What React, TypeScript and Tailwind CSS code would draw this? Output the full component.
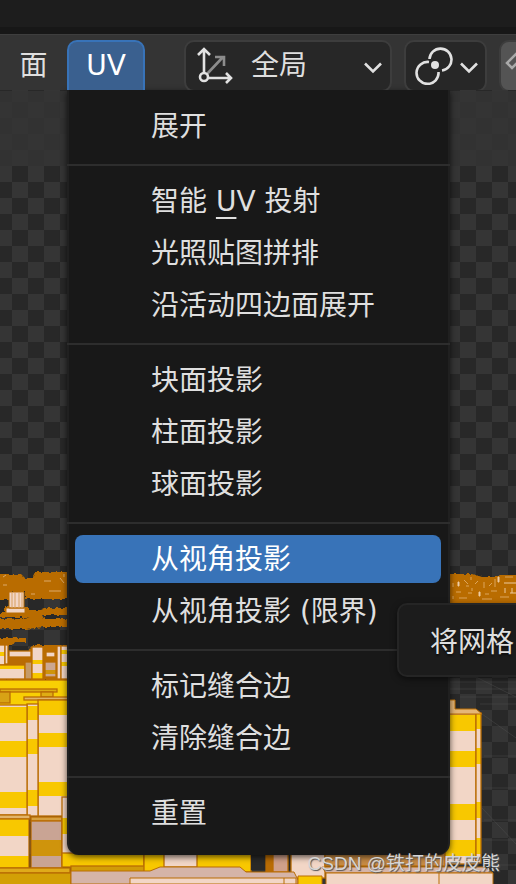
import React from "react";

type Item = { label: string; accel?: string; rest?: string };

const groups: Item[][] = [
  [{ label: "展开" }],
  [{ label: "智能 ", accel: "U", rest: "V 投射" }, { label: "光照贴图拼排" }, { label: "沿活动四边面展开" }],
  [{ label: "块面投影" }, { label: "柱面投影" }, { label: "球面投影" }],
  [{ label: "从视角投影" }, { label: "从视角投影 (限界)" }],
  [{ label: "标记缝合边" }, { label: "清除缝合边" }],
  [{ label: "重置" }],
];

const BROWN = "#b96c04";
const PINK = "#f2d6c6";
const YELLOW = "#f8c800";

type Block = { x: number; y: number; w: number; h: number; fill?: string; stripes?: number[][] };

const blocks: Block[] = [
  { x: -2, y: 645, w: 7, h: 20, stripes: [[652, 4]] },
  { x: 5, y: 645, w: 3, h: 19 },
  { x: 9, y: 651, w: 22, h: 6 },
  { x: 9, y: 658, w: 22, h: 7, fill: BROWN },
  { x: -2, y: 665, w: 27, h: 14, stripes: [[665, 4]] },
  { x: 25, y: 662, w: 7, h: 17, fill: "#c59a68" },
  { x: 32, y: 647, w: 11, h: 32, stripes: [[660, 4], [673, 6]] },
  { x: 46, y: 652, w: 9, h: 5 },
  { x: 45, y: 662, w: 11, h: 15, fill: "#cba791", stripes: [[670, 4]] },
  { x: 57, y: 646, w: 4, h: 33 },
  { x: 61, y: 646, w: 9, h: 33, stripes: [[650, 4], [662, 4]] },
  { x: -2, y: 680, w: 72, h: 36, fill: "#f8cf04" },
  { x: 0, y: 689, w: 57, h: 3, fill: "#dfad14" },
  { x: -2, y: 692, w: 12, h: 11, fill: "#d8a215" },
  { x: 41, y: 692, w: 12, h: 5, fill: "#dfad14" },
  { x: 24, y: 697, w: 46, h: 3, fill: "#e2b46a" },
  { x: 38, y: 700, w: 32, h: 116, stripes: [[700, 15], [733, 14], [782, 14]] },
  { x: 27, y: 704, w: 11, h: 112, stripes: [[706, 14], [739, 15], [790, 16]] },
  { x: -2, y: 705, w: 29, h: 110, stripes: [[707, 16], [741, 16], [792, 16]] },
  { x: -2, y: 815, w: 32, h: 4, fill: "#e2b46a" },
  { x: -2, y: 819, w: 31, h: 49, stripes: [[819, 17], [856, 12]] },
  { x: 31, y: 817, w: 31, h: 4, fill: "#d6a040" },
  { x: 31, y: 821, w: 31, h: 47, fill: "#c9a494", stripes: [[840, 16]] },
  { x: 62, y: 797, w: 12, h: 67, stripes: [[818, 16]] },
  { x: 62, y: 853, w: 82, h: 14, fill: YELLOW },
  { x: 71, y: 866, w: 80, h: 6, fill: "#d19b08" },
  { x: -2, y: 868, w: 72, h: 5, fill: "#e0ab1a" },
  { x: -2, y: 873, w: 73, h: 13, fill: "#d3a005" },
  { x: 440, y: 714, w: 36, h: 150, stripes: [[715, 16], [751, 16], [804, 16], [840, 16]] },
  { x: 476, y: 713, w: 5, h: 150, stripes: [[713, 16], [748, 16], [802, 16], [838, 16]] },
  { x: 144, y: 852, w: 107, h: 20, fill: YELLOW },
  { x: 164, y: 852, w: 33, h: 15 },
  { x: 266, y: 852, w: 7, h: 20, fill: BROWN },
  { x: 273, y: 852, w: 15, h: 20, fill: "#d0a08a" },
  { x: 291, y: 852, w: 34, h: 26 },
  { x: 325, y: 852, w: 120, h: 14, fill: "#c78b45" },
];

function Scene() {
  return (
    <svg className="absolute left-0 top-0" width="516" height="884" viewBox="0 0 516 884" aria-hidden="true">
      <defs>
        <pattern id="checker" x="12" y="166" width="32" height="32" patternUnits="userSpaceOnUse">
          <rect width="32" height="32" fill="#353535" />
          <path d="M0 0h16v16H0zM16 16h16v16H16z" fill="#282828" />
        </pattern>
        <filter id="rough" x="-5%" y="-5%" width="110%" height="110%">
          <feTurbulence type="fractalNoise" baseFrequency="0.25" numOctaves="2" seed="4" />
          <feDisplacementMap in="SourceGraphic" scale="4" xChannelSelector="R" yChannelSelector="G" />
        </filter>
      </defs>
      <rect width="516" height="884" fill="url(#checker)" />
      <rect y="91" width="516" height="75" fill="#343434" opacity="0.8" />
      <path
        d="M450 664L516 697M482 714L516 738M482 808L516 844M450 682h66M450 689h66M460 697h56M480 704h36M484 756h32M484 788h32M484 820h32M484 840h32M484 865h32"
        stroke="#5a5a5a"
        opacity="0.35"
        fill="none"
      />
      <g fill={BROWN} filter="url(#rough)">
        <path d="M-5 574H20L24 578H33L36 572H72V599H26V592H9V600H-5zM-5 613H5V607H29V610H40L44 608H72V615H42L44 619H72V627H44L26 629H-5V619H12L30 617H-5zM-5 638H26V642H14L12 645H-5zM28 648L36 645H72V680H-5V655H28z" />
        <path d="M445 574H473L482 577H495L500 575H520V610H445z" />
      </g>
      <path d="M3 585h4M3 577l3-2M44 581h7M49 591h12M60 578l4 5M31 594h4M64 574v3" stroke="#dca968" fill="none" />
      <path d="M9 592h15v16H9zM6 608h19v5H6z" fill={PINK} stroke={BROWN} />
      <path d="M12 592v16M15 592v16M19 592v16M22 592v16" stroke="#d8a060" fill="none" />
      {blocks.map((b, i) => (
        <g key={i}>
          <rect x={b.x} y={b.y} width={b.w} height={b.h} fill={b.fill ?? PINK} />
          {b.stripes?.map(([y, h]) => (
            <rect key={y} x={b.x} y={y} width={b.w} height={h} fill={b.fill ? "#cf940c" : YELLOW} />
          ))}
          <rect x={b.x} y={b.y} width={b.w} height={b.h} fill="none" stroke={BROWN} strokeWidth="1.3" />
        </g>
      ))}
      <g fill={PINK} stroke="#ecc99d" strokeWidth="1">
        <path d="M458 582h1v4h-1zM479 592h1v4h-1zM498 577h1v5h-1zM504 583h12M505 588v5M512 588v5M510 593h6" />
      </g>
      <path
        d="M453 583v4M464 580l4 4M471 577v3M466 586h3M475 584l3-3M484 582v6M489 586l3-3M456 592h5M468 593h4M485 594h4M491 591h6M459 598h8M482 599h10M500 597h9M495 579v8M472 588v3M453 596v3M505 577h8"
        stroke="#dca55c"
        fill="none"
      />
      <path d="M449 700h6v9h21l6 5h-33z" fill="#e5b677" stroke={BROWN} />
      <path d="M71 871H150L160 867H240L246 872L294 872L298 880V884H71z" fill="#d5b4a8" stroke={BROWN} />
      <path d="M130 878H296V884H130zM284 878v6" fill={PINK} stroke={BROWN} />
      <path d="M322 867H484L493 873H326z" fill="#d5b4a8" stroke={BROWN} />
      <path d="M326 873H493V886H326zM439 873v13" fill={PINK} stroke={BROWN} />
      <path d="M298 876h24v10h-24z" fill={YELLOW} stroke={BROWN} />
      <path d="M251 854h14v16h-14z" fill="#292929" />
    </svg>
  );
}

function Chevron() {
  return (
    <svg className="mt-[3px]" width="18" height="12" viewBox="0 0 18 12" fill="none" stroke="#e0e0e0" strokeWidth="2.6" aria-hidden="true">
      <path d="M1 1.5L9 9.5L17 1.5" />
    </svg>
  );
}

export default function App() {
  return (
    <main className="relative min-h-screen overflow-hidden bg-[#303030] font-['DejaVu_Sans','Noto_Sans_CJK_SC',sans-serif] text-[28px] leading-[40px] text-[#dfdfdf] [text-shadow:0_2px_2px_#0008]">
      <Scene />
      <div className="relative">
        <div className="h-[34px] border-b-[7px] border-[#171717] bg-[#1d1d1d]" />
        <header className="flex h-14 items-start overflow-hidden border-t border-[#3e3e3e] bg-[#343434] pt-[5px]">
          <button className="h-[52px] w-[67px] shrink-0">面</button>
          <button className="h-[56px] w-[78px] shrink-0 rounded-t-[10px] border-2 border-b-0 border-[#3873b8] bg-[#3a608f] pb-[6px] text-white">UV</button>
          <button className="ml-[39px] flex h-[52px] w-[208px] shrink-0 items-center rounded-[10px] border-2 border-[#3d3d3d] bg-[#272727] pl-[10px] pr-2">
            <svg width="38" height="38" viewBox="0 0 38 38" fill="none" stroke="#e2e2e2" strokeWidth="2.6" aria-hidden="true">
              <path d="M11 27L27 10M19 10h9v9" stroke="#8c8c8c" />
              <path d="M8 26V3M2 8l6-6 6 6M12 31h23M30 26l5 5-5 5" />
              <circle cx="8" cy="30" r="4" />
            </svg>
            <span className="ml-[17px] flex-1 text-left">全局</span>
            <Chevron />
          </button>
          <button className="ml-3 flex h-[52px] w-[83px] shrink-0 items-center justify-between rounded-[10px] border-2 border-[#3d3d3d] bg-[#272727] pl-[9px] pr-[7px]">
            <svg width="38" height="38" viewBox="0 0 38 38" fill="none" stroke="#e2e2e2" strokeWidth="2.6" aria-hidden="true">
              <path d="M14.500 12A11 11 0 1 1 27 23.500M14 15A11 11 0 1 0 23.500 25" />
              <circle cx="20" cy="18" r="4" fill="#e2e2e2" stroke="none" />
            </svg>
            <Chevron />
          </button>
          <button aria-label="吸附" className="ml-3 h-[52px] w-[60px] shrink-0 rounded-[10px] border-2 border-[#3d3d3d] bg-[#545454] pl-1">
            <svg width="30" height="34" viewBox="0 0 30 34" fill="none" stroke="#aaa" strokeWidth="2.500" aria-hidden="true">
              <path d="M14 2L2 14l5 5L19 7" />
            </svg>
          </button>
        </header>
        <nav aria-label="UV" className="ml-[67px] mr-[66px] rounded-b-[12px] border-x-2 border-[#202020] bg-[#181818] pb-4 pt-[10px] shadow-[0_2px_6px_#000a]">
          {groups.map((items, g) => (
            <ul key={g} className={g ? "-mx-[2px] mt-3 border-t-2 border-[#2d2d2d] pt-[9px]" : "-mx-[2px]"}>
              {items.map((it) => (
                <li key={it.label} className="py-[2px] pl-2 pr-[9px]">
                  <button
                    className={
                      "block h-12 w-full whitespace-pre rounded-[8px] pl-[76px] pt-[2px] text-left " +
                      (it.label === "从视角投影" ? "bg-[#3873b8] text-white" : "")
                    }
                  >
                    {it.label}
                    {it.accel && <span className="underline decoration-2 underline-offset-[6px]">{it.accel}</span>}
                    {it.rest}
                  </button>
                </li>
              ))}
            </ul>
          ))}
        </nav>
      </div>
      <div role="tooltip" className="absolute left-[397px] top-[603px] h-[74px] w-[300px] rounded-[10px] border-2 border-[#252525] bg-[#1c1c1c] pl-[31px] pt-[18px] shadow-[0_2px_6px_#0008]">
        将网格
      </div>
      <p className="absolute right-4 top-[850px] whitespace-nowrap font-['Liberation_Sans','Noto_Sans_CJK_SC',sans-serif] text-[19px] leading-[28px] text-[#d6d6d6] [text-shadow:1px_1px_1px_#555]">
        CSDN @铁打的皮皮熊
      </p>
    </main>
  );
}
